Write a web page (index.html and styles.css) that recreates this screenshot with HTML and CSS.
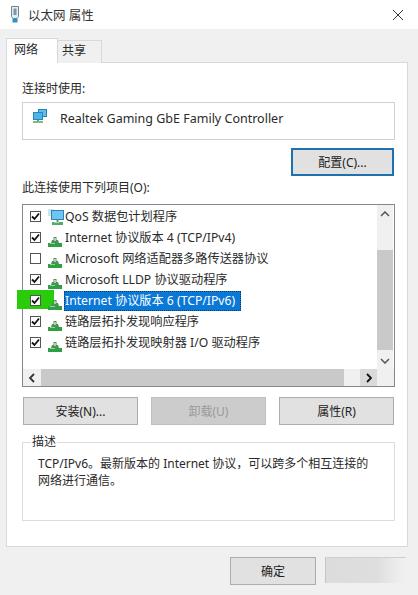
FILE: index.html
```html
<!DOCTYPE html>
<html lang="zh-CN">
<head>
<meta charset="utf-8">
<title>以太网 属性</title>
<link rel="stylesheet" href="styles.css">
</head>
<body>
<svg class="defs" width="0" height="0" aria-hidden="true">
  <symbol id="net" viewBox="0 0 14 10">
    <path d="M5.500 0h3v3h1.500l1 3h-8l1-3h1.500z" fill="#4f8f57"/>
    <path d="M6.300 1h1.400v3h-1.400z" fill="#d5ecd5"/>
    <path d="M0 6h14v4h-14z" fill="#2ea043"/>
    <path d="M2 6h5v1h-5z" fill="#8fd49a"/>
  </symbol>
  <symbol id="check" viewBox="0 0 11 11">
    <path d="M2 5.500l2.500 2.500 4.500-5.500" fill="none" stroke="#111" stroke-width="1.800"/>
  </symbol>
  <symbol id="monitors" viewBox="0 0 16 16">
    <path d="M6 1h9v8h-9z" fill="#2f7fb0"/>
    <path d="M7 2h7v6h-7z" fill="#5cc0ea"/>
    <path d="M1 4h10v8h-10z" fill="#2f83b5"/>
    <path d="M2 5h8v6h-8z" fill="#49b6ea"/>
    <path d="M5 12h2v1h-2z" fill="#888"/>
    <path d="M1 13h10v2h-10z" fill="#78c078"/>
  </symbol>
  <symbol id="qos" viewBox="0 0 18 18">
    <path d="M1 1h6v7h-6z" fill="#cfe3ee"/>
    <path d="M4 2h13v10h-13z" fill="#2f83b5"/>
    <path d="M5 3h11v8h-11z" fill="#6cc6ef"/>
    <path d="M9.500 12h2v2h-2z" fill="#7d8a8f"/>
    <path d="M5 14h11v3h-11z" fill="#4fae5c"/>
    <path d="M7 14h5v1h-5z" fill="#a8dcae"/>
  </symbol>
</svg>
<div class="window">
  <header class="titlebar">
    <svg class="title-icon" width="10" height="17" viewBox="0 0 10 17">
      <path d="M1.500 .5h7v10l-1.500 2h-4l-1.500-2z" fill="#e6edf2" stroke="#71858f"/>
      <path d="M3.500 2.500h3v6.500h-3z" fill="#7d95a5"/>
      <path d="M2.500 12.500h5v4h-5z" fill="#2f90c6"/>
    </svg>
    <span class="title-text">以太网 属性</span>
    <svg class="close" width="12" height="12" viewBox="0 0 12 12">
      <path d="M1 1l10 10M11 1l-10 10" stroke="#333" stroke-width="1" fill="none"/>
    </svg>
  </header>
  <main class="dialog">
    <nav class="tabs">
      <div class="tab tab-active">网络</div>
      <div class="tab">共享</div>
    </nav>
    <section class="panel">
      <div class="label label-first">连接时使用:</div>
      <div class="adapter">
        <svg class="adapter-icon" width="16" height="16"><use href="#monitors"/></svg>
        <span>Realtek Gaming GbE Family Controller</span>
      </div>
      <div class="config-row"><button class="btn btn-focus">配置(C)...</button></div>
      <div class="label label-list">此连接使用下列项目(O):</div>
      <div class="listbox">
        <div class="list-top">
          <ul class="rows">
            <li class="row"><span class="cb"><svg width="11" height="11"><use href="#check"/></svg></span><svg class="item-icon qos" width="18" height="18"><use href="#qos"/></svg><span class="item-text">QoS 数据包计划程序</span></li>
            <li class="row"><span class="cb"><svg width="11" height="11"><use href="#check"/></svg></span><svg class="item-icon net" width="14" height="10"><use href="#net"/></svg><span class="item-text">Internet 协议版本 4 (TCP/IPv4)</span></li>
            <li class="row"><span class="cb"></span><svg class="item-icon net" width="14" height="10"><use href="#net"/></svg><span class="item-text">Microsoft 网络适配器多路传送器协议</span></li>
            <li class="row"><span class="cb"><svg width="11" height="11"><use href="#check"/></svg></span><svg class="item-icon net" width="14" height="10"><use href="#net"/></svg><span class="item-text">Microsoft LLDP 协议驱动程序</span></li>
            <li class="row"><span class="cb"><svg width="11" height="11"><use href="#check"/></svg></span><svg class="item-icon net" width="14" height="10"><use href="#net"/></svg><span class="item-text selected">Internet 协议版本 6 (TCP/IPv6)</span><span class="marker"></span></li>
            <li class="row"><span class="cb"><svg width="11" height="11"><use href="#check"/></svg></span><svg class="item-icon net" width="14" height="10"><use href="#net"/></svg><span class="item-text">链路层拓扑发现响应程序</span></li>
            <li class="row"><span class="cb"><svg width="11" height="11"><use href="#check"/></svg></span><svg class="item-icon net" width="14" height="10"><use href="#net"/></svg><span class="item-text">链路层拓扑发现映射器 I/O 驱动程序</span></li>
          </ul>
          <div class="vscroll">
            <div class="arrow-v"><svg width="10" height="6" viewBox="0 0 10 6"><path d="M1 5l4-4 4 4" fill="none" stroke="#555" stroke-width="1.500"/></svg></div>
            <div class="vspace-top"></div>
            <div class="vthumb"></div>
            <div class="vspace-bottom"></div>
            <div class="arrow-v"><svg width="10" height="6" viewBox="0 0 10 6"><path d="M1 1l4 4 4-4" fill="none" stroke="#555" stroke-width="1.500"/></svg></div>
          </div>
        </div>
        <div class="hscroll">
          <div class="arrow-h"><svg width="6" height="10" viewBox="0 0 6 10"><path d="M5 1l-4 4 4 4" fill="none" stroke="#333" stroke-width="1.800"/></svg></div>
          <div class="hthumb"></div>
          <div class="hspace"></div>
          <div class="arrow-h arrow-h-right"><svg width="6" height="10" viewBox="0 0 6 10"><path d="M1 1l4 4-4 4" fill="none" stroke="#111" stroke-width="1.800"/></svg></div>
          <div class="corner"></div>
        </div>
      </div>
      <div class="action-row">
        <button class="btn btn-action">安装(N)...</button>
        <button class="btn btn-action btn-disabled">卸载(U)</button>
        <button class="btn btn-action">属性(R)</button>
      </div>
      <fieldset class="group">
        <legend class="group-title">描述</legend>
        <p class="group-text">TCP/IPv6。最新版本的 Internet 协议，可以跨多个相互连接的网络进行通信。</p>
      </fieldset>
    </section>
    <footer class="footer">
      <button class="btn btn-ok">确定</button>
      <div class="smudge"></div>
    </footer>
  </main>
</div>
</body>
</html>
```

FILE: styles.css
```css
* { box-sizing: border-box; }
html, body { margin: 0; padding: 0; }
body {
  width: 418px;
  height: 595px;
  overflow: hidden;
  font-family: "Noto Sans", "Noto Sans CJK SC", sans-serif;
  font-size: 12px;
  color: #2a2a2a;
  background: #f0f0f0;
}
.defs { position: absolute; }
.window { display: flex; flex-direction: column; height: 595px; }
.titlebar {
  height: 29px;
  background: #fff;
  display: flex;
  align-items: center;
  padding: 0 14px 0 10px;
  flex: none;
}
.title-icon { flex: none; }
.title-text { margin-left: 8px; font-size: 12.500px; color: #333; }
.close { margin-left: auto; }
.dialog { flex: 1; padding: 9px 10px 0 6px; display: flex; flex-direction: column; }
.tabs { display: flex; align-items: flex-end; height: 25px; margin-bottom: -1px; position: relative; z-index: 1; }
.tab {
  width: 45px;
  height: 23px;
  border: 1px solid #d9d9d9;
  border-bottom: none;
  background: #f0f0f0;
  padding-left: 4px;
  font-size: 12px;
  line-height: 20px;
  margin-left: -1px;
}
.tab-active {
  width: 52px;
  height: 25px;
  margin-left: 0;
  background: #fff;
  padding-left: 7px;
  line-height: 22px;
  position: relative;
}
.panel {
  height: 485px;
  flex: none;
  background: #fff;
  border: 1px solid #d9d9d9;
  padding: 0 12px 0 15px;
}
.label { height: 16px; line-height: 16px; font-size: 12px; }
.label-first { margin-top: 18px; }
.label-list { margin-top: 4px; }
.adapter {
  height: 38px;
  margin-top: 5px;
  border: 1px solid #d0d0d0;
  display: flex;
  align-items: center;
  padding: 0 0 6px 9px;
  font-size: 12.500px;
}
.adapter-icon { margin-right: 12px; margin-top: -4px; }
.config-row { display: flex; justify-content: flex-end; padding: 8px 1px 0 0; }
.btn {
  font: inherit;
  font-size: 12px;
  color: #222;
  background: #e1e1e1;
  border: 1px solid #adadad;
  padding: 0;
  height: 28px;
}
.btn-focus { width: 103px; border: 2px solid #1f70ae; }
.listbox {
  margin-top: 8px;
  height: 183px;
  border: 1px solid #828790;
  display: flex;
  flex-direction: column;
}
.list-top { flex: 1; display: flex; min-height: 0; }
.rows { flex: 1; margin: 0; padding: 1px 0 0 7px; list-style: none; position: relative; }
.row { height: 21px; display: flex; align-items: center; position: relative; }
.cb {
  width: 11px;
  height: 11px;
  flex: none;
  border: 1px solid #555;
  background: #fff;
  display: flex;
  align-items: center;
  justify-content: center;
  position: relative;
  z-index: 1;
}
.cb svg { flex: none; }
.item-icon { flex: none; }
.item-icon.net { margin: 9px 2px 0 7px; position: relative; z-index: 1; }
.item-icon.qos { margin: 0 -1px 0 6px; }
.item-text { margin-left: 0; padding: 0 1px; line-height: 20px; font-size: 12.200px; white-space: nowrap; }
.selected { background: #0a78d7; color: #fff; outline: 1px dotted #0b3c6a; outline-offset: -1px; padding-right: 6px; }
.marker { position: absolute; left: -13px; top: 0; width: 37px; height: 19px; background: #28cc0a; }
.vscroll { width: 16px; margin-right: 1px; background: #f0f0f0; display: flex; flex-direction: column; }
.arrow-v { height: 17px; display: flex; align-items: center; justify-content: center; flex: none; }
.vspace-top { height: 28px; flex: none; }
.vthumb { height: 100px; flex: none; background: #c9c9c9; }
.vspace-bottom { flex: 1; }
.hscroll { height: 17px; flex: none; display: flex; background: #f0f0f0; }
.arrow-h { width: 18px; flex: none; display: flex; align-items: center; justify-content: center; }
.arrow-h-right { background: #dadada; width: 17px; }
.hthumb { width: 303px; flex: none; background: #c9c9c9; }
.hspace { flex: 1; }
.corner { width: 17px; flex: none; background: #f0f0f0; }
.action-row { display: flex; justify-content: space-between; padding: 10px 1px 0 1px; }
.btn-action { width: 115px; }
.btn-disabled { background: #ccc; border-color: #bfbfbf; color: #9a9a9a; }
.group {
  margin: 10px 0 0;
  padding: 0 15px;
  height: 86px;
  border: 1px solid #dcdcdc;
  min-width: 0;
}
.group-title { padding: 0 1px; margin-left: -7px; font-size: 12px; line-height: 14px; }
.group-text { margin: 6px 0 0; font-size: 12px; line-height: 17px; }
.footer { display: flex; padding: 10px 0 0 224px; gap: 9px; }
.btn-ok { width: 86px; height: 28px; }
.smudge {
  width: 81px;
  height: 26px;
  background: linear-gradient(90deg, #dcdcdc 0%, #dedede 65%, #ececec 88%, #f0f0f0 100%);
  border-left: 1px solid #c4c4c4;
  border-top: 1px solid #cfcfcf;
}
```
